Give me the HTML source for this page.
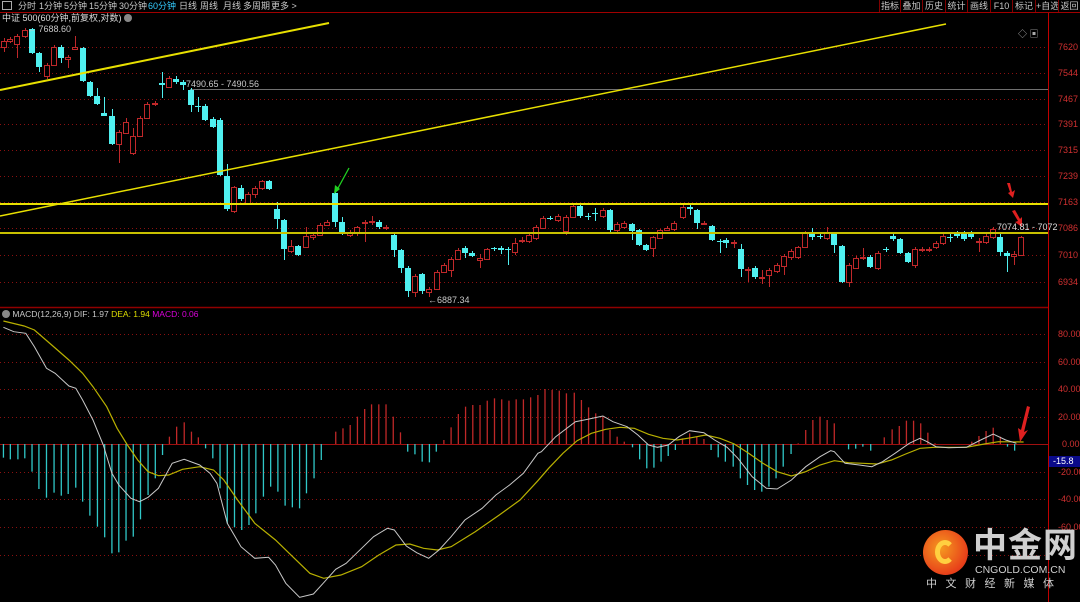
<!DOCTYPE html>
<html><head><meta charset="utf-8">
<style>
*{margin:0;padding:0;box-sizing:border-box}
body{width:1080px;height:602px;background:#000;overflow:hidden;position:relative;font-family:"Liberation Sans","Noto Sans CJK SC",sans-serif;color:#c8c8c8}
.t{position:absolute;font-size:9px;white-space:nowrap;line-height:11px}
#top{position:absolute;left:0;top:0;width:1080px;height:13px;border-bottom:1px solid #a00000}
#top span{position:absolute;top:0px;font-size:9px;line-height:12px;color:#c8c8c8;white-space:nowrap}
.btn{position:absolute;top:0;height:12px;border-left:1px solid #800000;font-size:9px;line-height:12px;text-align:center;color:#c8c8c8;white-space:nowrap;overflow:hidden}
.ax{position:absolute;left:1058px;font-size:9px;color:#d03030}
svg{position:absolute;left:0;top:0}
</style></head><body>
<svg id="s" width="1080" height="602" xmlns="http://www.w3.org/2000/svg"></svg>
<div id="top">
<span style="left:2px;top:1px;width:10px;height:9px;border:1px solid #aaa"></span>
<span style="left:18px">分时</span><span style="left:39px">1分钟</span><span style="left:64px">5分钟</span><span style="left:89px">15分钟</span><span style="left:119px">30分钟</span><span style="left:148px;color:#3cf">60分钟</span><span style="left:179px">日线</span><span style="left:200px">周线</span><span style="left:223px">月线</span><span style="left:243px">多周期</span><span style="left:271px">更多 &gt;</span>
<div class="btn" style="left:879px;width:21px">指标</div><div class="btn" style="left:900px;width:22px">叠加</div><div class="btn" style="left:922px;width:23px">历史</div><div class="btn" style="left:945px;width:22px">统计</div><div class="btn" style="left:967px;width:23px">画线</div><div class="btn" style="left:990px;width:22px">F10</div><div class="btn" style="left:1012px;width:23px">标记</div><div class="btn" style="left:1035px;width:23px">+自选</div><div class="btn" style="left:1058px;width:22px">返回</div>
</div>
<div class="t" style="left:2px;top:13px;color:#ddd">中证 500(60分钟,前复权,对数) <span style="display:inline-block;width:8px;height:8px;border-radius:4px;background:#888;vertical-align:-1px"></span></div>
<div class="t" style="left:27px;top:24px">← 7688.60</div>
<div class="t" style="left:186px;top:79px">7490.65 - 7490.56</div>
<div class="t" style="left:428px;top:295px">←6887.34</div>
<div class="t" style="left:997px;top:222px;color:#ddd">7074.81 - 7072</div>
<div class="t" style="left:2px;top:309px;font-size:8.5px"><span style="display:inline-block;width:8px;height:8px;border-radius:4px;background:#888;vertical-align:-1px"></span> MACD(12,26,9) DIF: 1.97 <span style="color:#dd0">DEA: 1.94</span> <span style="color:#d0d">MACD: 0.06</span></div>
<div class="ax" style="top:42px">7620</div><div class="ax" style="top:68px">7544</div><div class="ax" style="top:94px">7467</div><div class="ax" style="top:119px">7391</div><div class="ax" style="top:145px">7315</div><div class="ax" style="top:171px">7239</div><div class="ax" style="top:197px">7163</div><div class="ax" style="top:223px">7086</div><div class="ax" style="top:250px">7010</div><div class="ax" style="top:277px">6934</div>
<div class="ax" style="top:329px">80.00</div><div class="ax" style="top:357px">60.00</div><div class="ax" style="top:384px">40.00</div><div class="ax" style="top:412px">20.00</div><div class="ax" style="top:439px;left:1062px">0.00</div><div class="ax" style="top:467px">-20.00</div><div class="ax" style="top:494px">-40.00</div><div class="ax" style="top:522px">-60.00</div>
<div style="position:absolute;left:1049px;top:456px;width:31px;height:11px;background:#0a0a8a;color:#fff;font-size:9px;padding-left:4px">-15.8</div>
<div class="t" style="left:1018px;top:29px;color:#aaa">◇ ▣</div>
<div style="position:absolute;left:923px;top:530px;width:45px;height:45px;border-radius:50%;background:radial-gradient(circle at 40% 40%,#f59a20,#e8401a 70%,#c02a10)"></div>
<div style="position:absolute;left:935px;top:540px;width:20px;height:24px;border-radius:50%;border:5px solid #ffd040;border-right-color:transparent"></div>
<div class="t" style="left:973px;top:527px;font-size:34px;line-height:38px;color:#cfcfcf;font-weight:bold;letter-spacing:1px">中金网</div>
<div class="t" style="left:975px;top:565px;font-size:10.5px;color:#cfcfcf">CNGOLD.COM.CN</div>
<div class="t" style="left:926px;top:577px;font-size:11px;line-height:14px;color:#cfcfcf;letter-spacing:8.5px">中文财经新媒体</div>
<script>
var s=document.getElementById('s'),h='';
function L(x1,y1,x2,y2,c,w,d){h+='<line x1="'+x1+'" y1="'+y1+'" x2="'+x2+'" y2="'+y2+'" stroke="'+c+'" stroke-width="'+(w||1)+'"'+(d?' stroke-dasharray="'+d+'"':'')+'/>';}
[47,73,99,124,150,176,202,228,255,282].forEach(function(y){L(0,y+.5,1048,y+.5,'#8a1010',1,'1 3');});
[334,362,389,417,472,499,527,555].forEach(function(y){L(0,y+.5,1048,y+.5,'#8a1010',1,'1 3');});
L(0,444.5,1048,444.5,'#a01010',1);
L(1048.5,13,1048.5,602,'#c00000',1);
L(0,307.5,1048,307.5,'#900000',1.5);
L(190,89.5,1048,89.5,'#707070',1);
var C=[[4,41,47,38,52,1],[10,39,41,37,43,1],[17,36,44,34,58,1],[25,30,36,28,38,1],[32,29,53,28,54,0],[39,53,67,52,72,0],[47,65,76,63,79,1],[54,47,65,45,66,1],[61,47,58,45,63,0],[68,57,59,55,68,1],[75,47,49,36,50,1],[83,48,81,47,82,0],[90,82,96,81,97,0],[97,96,104,88,105,0],[104,113,116,97,116,0],[112,116,144,109,145,0],[119,132,144,130,163,1],[126,122,133,118,134,1],[133,136,153,128,155,1],[140,118,136,116,137,1],[147,104,118,102,119,1],[155,103,104,101,106,1],[162,83,85,72,98,0],[169,78,87,76,88,1],[176,79,82,76,84,0],[183,82,85,80,90,0],[191,90,105,88,112,0],[198,106,107,97,112,0],[205,106,120,104,121,0],[213,119,127,117,128,0],[220,120,175,118,176,0],[227,176,209,164,211,0],[234,187,211,186,213,1],[241,188,199,185,201,0],[248,194,203,192,204,1],[255,188,194,186,198,1],[262,181,188,180,190,1],[269,181,189,180,190,0],[277,209,219,202,229,0],[284,220,249,219,260,0],[291,246,251,240,253,1],[298,246,255,245,256,0],[306,236,247,227,248,1],[313,235,237,232,240,1],[320,225,235,223,236,1],[327,222,225,220,226,1],[335,193,222,192,227,0],[342,222,233,217,235,0],[350,233,235,230,237,1],[357,227,233,226,236,1],[365,222,223,220,242,1],[372,221,222,216,225,1],[379,222,227,220,229,0],[386,227,228,225,230,1],[394,235,250,233,257,0],[401,250,268,249,273,0],[408,268,291,266,297,0],[415,276,292,274,297,1],[422,274,291,273,294,0],[429,289,292,287,297,1],[437,272,289,270,290,1],[444,265,272,263,273,1],[451,259,270,257,277,1],[458,250,259,248,260,1],[465,248,253,246,258,0],[472,253,256,251,257,0],[480,258,260,254,268,1],[487,249,259,248,260,1],[494,248,249,247,251,0],[501,248,250,246,254,0],[508,249,250,247,265,0],[515,243,252,238,255,1],[522,240,241,237,243,1],[529,235,241,233,243,1],[536,227,238,225,240,1],[543,218,228,216,229,1],[550,218,219,216,220,0],[558,216,220,214,222,1],[566,217,231,215,235,1],[573,206,217,205,218,1],[580,206,216,205,218,0],[588,216,217,213,220,0],[595,213,214,208,221,0],[603,210,216,208,218,1],[610,210,230,209,232,0],[617,224,230,222,232,1],[624,223,227,221,229,1],[632,224,231,223,240,0],[639,230,245,229,246,0],[646,245,250,244,251,0],[653,237,248,236,257,1],[660,230,238,229,239,1],[667,228,230,226,231,1],[674,223,229,221,231,1],[683,207,217,205,219,1],[690,207,209,205,215,0],[697,210,223,209,229,0],[704,223,224,221,225,1],[712,226,240,225,241,0],[720,241,242,239,253,0],[726,240,243,238,248,0],[734,242,243,240,248,1],[741,249,269,244,277,0],[748,269,270,267,282,1],[755,268,277,266,279,0],[762,277,278,270,284,1],[769,270,275,268,287,1],[777,265,271,263,273,1],[784,256,266,254,275,1],[791,251,257,249,260,1],[798,247,257,246,259,1],[805,233,247,231,248,1],[812,233,237,228,240,0],[820,236,237,234,239,0],[827,233,238,227,240,1],[834,233,245,232,253,0],[842,246,282,245,283,0],[849,265,282,263,287,1],[856,258,268,256,269,1],[863,257,258,248,260,1],[870,257,267,255,268,0],[878,253,268,251,270,1],[886,249,250,247,252,0],[893,236,239,233,241,0],[900,239,253,238,254,0],[908,253,262,252,263,0],[915,249,265,247,268,1],[922,249,250,247,252,1],[929,249,250,247,252,1],[936,243,247,241,249,1],[943,236,243,234,245,1],[950,237,238,233,242,0],[957,233,236,231,238,0],[964,233,239,231,241,0],[971,233,237,231,239,0],[979,241,242,238,252,1],[986,236,242,234,244,1],[993,229,237,227,239,1],[1000,237,252,233,256,0],[1007,253,256,251,272,0],[1014,254,256,251,265,1],[1021,237,255,236,256,1]];
C.forEach(function(c){var col=c[5]?'#c0282a':'#50f0f0';L(c[0]+.5,c[3],c[0]+.5,c[4],col,1);
var hh=Math.max(c[2]-c[1],1);
if(c[5])h+='<rect x="'+(c[0]-2.5)+'" y="'+(c[1]+.5)+'" width="5" height="'+hh+'" fill="#000" stroke="'+col+'" stroke-width="1"/>';
else h+='<rect x="'+(c[0]-3)+'" y="'+c[1]+'" width="6" height="'+hh+'" fill="'+col+'"/>';});
L(0,90,329,23,'#e8e000',2);L(0,216,946,24,'#e8e000',1.5);
L(0,204,1048,204,'#e8e000',2);L(0,233,1048,233,'#c8c000',2);
var S1=2.904,S2=2.8;
var B1=[[10,443],[30,448],[52,448],[72,445],[93,485],[113,537],[135,563],[157,548],[178,557],[198,552],[220,533],[240,575],[261,617],[283,650],[304,682],[325,730],[345,727],[366,692],[387,680],[408,628],[430,555],[451,505],[472,435],[492,380],[513,350],[535,337],[556,365],[576,382],[597,415],[618,445],[639,535],[660,640],[681,652],[702,660],[723,645],[743,610],[765,560],[786,530],[807,545],[828,587],[849,592],[870,595],[890,550],[912,505],[933,450],[975,365],[996,355],[1017,345],[1038,320],[1059,297],[1079,283],[1100,283],[1121,283],[1142,320],[1163,367],[1184,425],[1205,433],[1226,455],[1247,457],[1267,425],[1289,390],[1310,352],[1331,312],[1352,290],[1373,285],[1394,285],[1415,272],[1436,265],[1457,268],[1478,272],[1499,268],[1520,268],[1541,262],[1562,255]];
B1.forEach(function(b){var x=b[0]/S1,y=310+b[1]/3;L(x,444,x,y,y<444?'#c02828':'#30c8c8',1.3);});
var B2=[[10,87],[30,80],[50,73],[70,57],[90,60],[110,62],[130,70],[152,68],[172,90],[192,112],[212,130],[232,140],[252,180],[272,200],[292,215],[315,232],[335,268],[355,295],[375,293],[395,275],[415,258],[435,240],[455,205],[475,190],[495,200],[515,207],[535,240],[555,262],[575,275],[597,290],[617,325],[637,345],[657,360],[677,365],[697,350],[717,325],[737,290],[759,252],[779,220],[800,180],[820,150],[840,140],[860,150],[880,160],[920,238],[940,236],[960,230],[982,242],[1020,202],[1042,178],[1062,168],[1082,152],[1102,152],[1122,160],[1142,188],[1162,220],[1265,215],[1285,198],[1305,183],[1325,173],[1345,200],[1365,230],[1385,242]];
B2.forEach(function(b){var x=520+b[0]/S2,y=370+b[1]/3;if(x>541)L(x,444,x,y,y<444?'#c02828':'#30c8c8',1.3);});
function P(a,ox,oy,sx,lim){return a.filter(function(q){var x=ox+q[0]/sx;return lim?x>lim:true}).map(function(q){return (ox+q[0]/sx).toFixed(1)+','+(oy+q[1]/3).toFixed(1)}).join(' ');}
var W1=[[10,52],[40,65],[75,70],[100,110],[135,175],[160,190],[200,228],[220,235],[240,270],[270,330],[300,405],[325,490],[345,525],[380,565],[405,575],[430,562],[460,535],[500,460],[535,448],[580,465],[610,490],[630,520],[660,640],[700,710],[740,745],[780,742],[800,765],[830,820],[870,862],[910,852],[940,818],[975,778],[1005,760],[1050,715],[1085,680],[1125,655],[1145,660],[1180,708],[1210,728],[1245,745],[1275,720],[1310,680],[1350,630],[1400,595],[1440,555],[1480,525],[1520,490],[1562,430]];
var W2=[[0,312],[30,285],[60,245],[100,200],[155,155],[190,148],[232,138],[260,155],[300,170],[330,195],[360,225],[385,232],[415,225],[445,200],[475,182],[515,188],[545,210],[580,232],[610,265],[650,320],[690,355],[720,357],[760,330],[800,290],[840,260],[870,242],[880,245],[910,280],[950,285],[985,290],[1015,275],[1050,250],[1090,220],[1120,205],[1140,215],[1165,230],[1200,233],[1250,232],[1290,210],[1325,192],[1360,210],[1390,220]];
var Y1=[[10,33],[70,48],[100,60],[150,105],[200,150],[240,190],[270,230],[310,290],[340,355],[370,405],[400,450],[430,485],[460,497],[490,495],[530,478],[580,470],[620,480],[650,510],[690,570],[740,640],[800,690],[850,740],[900,790],[940,805],[990,795],[1050,770],[1100,735],[1150,705],[1190,702],[1230,715],[1270,720],[1310,710],[1380,665],[1450,615],[1510,570],[1562,512]];
var Y2=[[0,382],[40,340],[80,295],[120,250],[160,212],[200,190],[240,178],[280,172],[320,175],[360,193],[400,205],[440,210],[480,203],[520,195],[560,205],[600,222],[640,250],[680,280],[720,305],[760,318],[800,305],[840,285],[880,272],[920,278],[960,280],[1000,282],[1040,270],[1080,252],[1120,235],[1160,232],[1250,232],[1300,222],[1340,215],[1410,216]];
h+='<polyline points="'+P(Y1,0,310,S1)+' '+P(Y2,520,370,S2,539)+'" fill="none" stroke="#b8b000" stroke-width="1.2"/>';
h+='<polyline points="'+P(W1,0,310,S1)+' '+P(W2,520,370,S2,539)+'" fill="none" stroke="#c8c8c8" stroke-width="1"/>';
L(349,168,337,190,'#20d020',1.3);h+='<polygon points="334,194 335,185 340,189" fill="#20d020"/>';
h+='<polygon points="1007,183 1010,183 1012,192 1015,190 1013,198 1008,193 1010,192" fill="#e02020"/>';
h+='<polygon points="1012,211 1015,210 1020,219 1022,217 1022,227 1015,222 1018,221" fill="#e02020"/>';
h+='<polygon points="1027,406 1030,407 1024,432 1028,430 1020,442 1018,428 1021,430" fill="#e02020"/>';
s.innerHTML=h;
</script>
</body></html>
